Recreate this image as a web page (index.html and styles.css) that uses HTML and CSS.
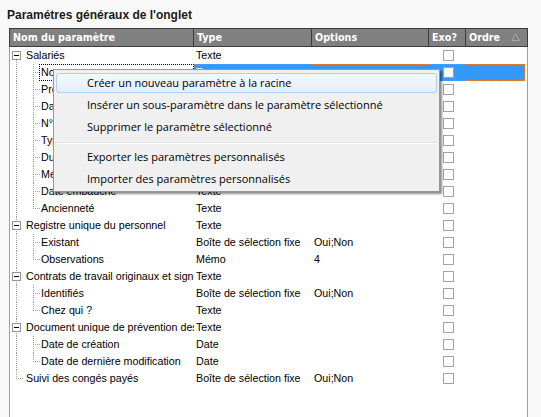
FILE: index.html
```html
<!DOCTYPE html>
<html lang="fr">
<head>
<meta charset="utf-8">
<title>Paramètres généraux de l'onglet</title>
<link rel="stylesheet" href="styles.css">
</head>
<body>
<div class="page">
  <h1 class="title">Paramétres généraux de l'onglet</h1>
  <div class="grid">
    <div class="head">
      <div class="h c1">Nom du paramètre</div>
      <div class="h c2">Type</div>
      <div class="h c3">Options</div>
      <div class="h c4">Exo?</div>
      <div class="h c5">Ordre<svg class="sort" width="9" height="8" viewBox="0 0 9 8"><path d="M4.5 0.8 L8.3 7.5 L0.7 7.5 Z" fill="none" stroke="#aaaaaa" stroke-width="1"/></svg></div>
    </div>
    <div class="body">
      <div class="row"><div class="c1 t root first"><span class="box"></span><span class="lbl">Salariés</span></div><div class="c2">Texte</div><div class="c3"></div><div class="c4"><span class="cb"></span></div><div class="c5"></div></div>
      <div class="row sel"><div class="c1 t child"><span class="lbl focus">Nom</span></div><div class="c2">Texte</div><div class="c3"></div><div class="c4"><span class="cb"></span></div><div class="c5"></div></div>
      <div class="row"><div class="c1 t child"><span class="lbl">Prénom</span></div><div class="c2">Texte</div><div class="c3"></div><div class="c4"><span class="cb"></span></div><div class="c5"></div></div>
      <div class="row"><div class="c1 t child"><span class="lbl">Date de naissance</span></div><div class="c2">Date</div><div class="c3"></div><div class="c4"><span class="cb"></span></div><div class="c5"></div></div>
      <div class="row"><div class="c1 t child"><span class="lbl">N° de sécurité sociale</span></div><div class="c2">Texte</div><div class="c3"></div><div class="c4"><span class="cb"></span></div><div class="c5"></div></div>
      <div class="row"><div class="c1 t child"><span class="lbl">Type de contrat</span></div><div class="c2">Texte</div><div class="c3"></div><div class="c4"><span class="cb"></span></div><div class="c5"></div></div>
      <div class="row"><div class="c1 t child"><span class="lbl">Durée du contrat</span></div><div class="c2">Texte</div><div class="c3"></div><div class="c4"><span class="cb"></span></div><div class="c5"></div></div>
      <div class="row"><div class="c1 t child"><span class="lbl">Métier</span></div><div class="c2">Texte</div><div class="c3"></div><div class="c4"><span class="cb"></span></div><div class="c5"></div></div>
      <div class="row"><div class="c1 t child"><span class="lbl">Date embauche</span></div><div class="c2">Texte</div><div class="c3"></div><div class="c4"><span class="cb"></span></div><div class="c5"></div></div>
      <div class="row"><div class="c1 t child last"><span class="lbl">Ancienneté</span></div><div class="c2">Texte</div><div class="c3"></div><div class="c4"><span class="cb"></span></div><div class="c5"></div></div>
      <div class="row"><div class="c1 t root"><span class="box"></span><span class="lbl">Registre unique du personnel</span></div><div class="c2">Texte</div><div class="c3"></div><div class="c4"><span class="cb"></span></div><div class="c5"></div></div>
      <div class="row"><div class="c1 t child"><span class="lbl">Existant</span></div><div class="c2">Boîte de sélection fixe</div><div class="c3">Oui;Non</div><div class="c4"><span class="cb"></span></div><div class="c5"></div></div>
      <div class="row"><div class="c1 t child last"><span class="lbl">Observations</span></div><div class="c2">Mémo</div><div class="c3">4</div><div class="c4"><span class="cb"></span></div><div class="c5"></div></div>
      <div class="row"><div class="c1 t root"><span class="box"></span><span class="lbl">Contrats de travail originaux et signés</span></div><div class="c2">Texte</div><div class="c3"></div><div class="c4"><span class="cb"></span></div><div class="c5"></div></div>
      <div class="row"><div class="c1 t child"><span class="lbl">Identifiés</span></div><div class="c2">Boîte de sélection fixe</div><div class="c3">Oui;Non</div><div class="c4"><span class="cb"></span></div><div class="c5"></div></div>
      <div class="row"><div class="c1 t child last"><span class="lbl">Chez qui ?</span></div><div class="c2">Texte</div><div class="c3"></div><div class="c4"><span class="cb"></span></div><div class="c5"></div></div>
      <div class="row"><div class="c1 t root"><span class="box"></span><span class="lbl">Document unique de prévention des risques</span></div><div class="c2">Texte</div><div class="c3"></div><div class="c4"><span class="cb"></span></div><div class="c5"></div></div>
      <div class="row"><div class="c1 t child"><span class="lbl">Date de création</span></div><div class="c2">Date</div><div class="c3"></div><div class="c4"><span class="cb"></span></div><div class="c5"></div></div>
      <div class="row"><div class="c1 t child last"><span class="lbl">Date de dernière modification</span></div><div class="c2">Date</div><div class="c3"></div><div class="c4"><span class="cb"></span></div><div class="c5"></div></div>
      <div class="row"><div class="c1 t leaflast"><span class="lbl">Suivi des congés payés</span></div><div class="c2">Boîte de sélection fixe</div><div class="c3">Oui;Non</div><div class="c4"><span class="cb"></span></div><div class="c5"></div></div>
    </div>
  </div>

  <div class="menu">
    <div class="mi hot"><span class="mt">Créer un nouveau paramètre à la racine</span></div>
    <div class="mi"><span class="mt">Insérer un sous-paramètre dans le paramètre sélectionné</span></div>
    <div class="mi"><span class="mt">Supprimer le paramètre sélectionné</span></div>
    <div class="sep"></div>
    <div class="mi"><span class="mt">Exporter les paramètres personnalisés</span></div>
    <div class="mi"><span class="mt">Importer des paramètres personnalisés</span></div>
  </div>
</div>
</body>
</html>
```

FILE: styles.css
```css
html, body {
  margin: 0;
  padding: 0;
  background: #f9f9f9;
  height: 100%;
  overflow: hidden;
}

.page {
  position: relative;
  width: 541px;
  height: 417px;
  overflow: hidden;
  font-family: "Liberation Sans", Arial, sans-serif;
  color: #000;
}

.title {
  margin: 8px 0 6px 7px;
  font: bold 12px/14px "Liberation Sans", Arial, sans-serif;
  color: #1a1a1a;
}

.grid {
  margin-left: 9px;
  width: 519px;
}

.head {
  display: flex;
  height: 19px;
  box-sizing: border-box;
  border: 1px solid #3c3c3c;
  background: #808080;
}

.h {
  box-sizing: border-box;
  border-right: 1px solid #3c3c3c;
  color: #fff;
  font-family: "DejaVu Sans Condensed", "DejaVu Sans", sans-serif;
  font-stretch: condensed;
  font-weight: bold;
  font-size: 10.7px;
  line-height: 17px;
  padding-left: 3px;
  white-space: nowrap;
  overflow: hidden;
}

.h.c5 {
  border-right: 0;
  display: flex;
  align-items: center;
  justify-content: space-between;
  padding-right: 5px;
}

.sort { display: block; margin-top: -1px; }

.c1 { width: 184px; flex: none; }
.c2 { width: 118px; flex: none; }
.c3 { width: 117px; flex: none; }
.c4 { width: 37px; flex: none; }
.c5 { width: 59px; flex: none; }

.body {
  background: #fff;
  border-left: 1px solid #a0a0a0;
  border-right: 1px solid #a0a0a0;
  height: 400px;
}

.row {
  display: flex;
  height: 17px;
  font-size: 10.7px;
  line-height: 17px;
}

.row > div {
  box-sizing: border-box;
  white-space: nowrap;
  overflow: hidden;
}

.row .c2, .row .c3 { padding-left: 2px; }

.row .c4 {
  display: flex;
  align-items: center;
  justify-content: center;
  padding-left: 2px;
}

.cb {
  width: 11px;
  height: 11px;
  box-sizing: border-box;
  border: 1px solid #a3a3a3;
  background: #fff;
}

/* tree cell */
.t {
  display: flex;
  align-items: center;
  background-repeat: no-repeat;
}

.t .lbl {
  flex: 1;
  min-width: 0;
  overflow: hidden;
}

.box {
  position: relative;
  flex: none;
  width: 9px;
  height: 9px;
  box-sizing: border-box;
  border: 1px solid #939393;
  background: #fff;
  margin: 0 5px 0 2px;
}

.box::after {
  content: "";
  position: absolute;
  left: 1px;
  top: 3px;
  width: 5px;
  height: 1px;
  background: #000;
}

/* dotted connector lines */
.root {
  background-image: repeating-linear-gradient(to bottom, #a0a0a0 0 1px, transparent 1px 2px);
  background-size: 1px 17px;
  background-position: 6px 0;
}

.root.first {
  background-size: 1px 8px;
  background-position: 6px 9px;
}

.child {
  padding-left: 29px;
  background-image:
    repeating-linear-gradient(to bottom, #a0a0a0 0 1px, transparent 1px 2px),
    repeating-linear-gradient(to bottom, #a0a0a0 0 1px, transparent 1px 2px),
    repeating-linear-gradient(to right, #a0a0a0 0 1px, transparent 1px 2px);
  background-size: 1px 17px, 1px 17px, 7px 1px;
  background-position: 6px 0, 23px 0, 23px 8px;
}

.child.last {
  background-size: 1px 17px, 1px 9px, 7px 1px;
}

.leaflast {
  padding-left: 16px;
  background-image:
    repeating-linear-gradient(to bottom, #a0a0a0 0 1px, transparent 1px 2px),
    repeating-linear-gradient(to right, #a0a0a0 0 1px, transparent 1px 2px);
  background-size: 1px 9px, 8px 1px;
  background-position: 6px 0, 6px 8px;
}

.child .lbl { padding-left: 2px; }

.lbl.focus {
  height: 17px;
  box-sizing: border-box;
  border: 1px dotted #000;
  padding-left: 1px;
  line-height: 15px;
}

/* selected row */
.row.sel .c2,
.row.sel .c3,
.row.sel .c4,
.row.sel .c5 {
  background: #3399ff;
  color: #fff;
  border-top: 1px dotted #e8822a;
  border-bottom: 1px dotted #e8822a;
  line-height: 15px;
}

.row.sel .c5 { border-right: 1px dotted #e8822a; }

/* context menu */
.menu {
  position: absolute;
  left: 53px;
  top: 69px;
  width: 387px;
  box-sizing: border-box;
  border: 1px solid #979797;
  background: #f0f0f0;
  padding: 2px 0 1px;
  box-shadow: 2px 2px 2px rgba(0, 0, 0, 0.45);
  font-family: "Open Sans", "Noto Sans", sans-serif;
  font-size: 11px;
  color: #000;
}

.mi {
  height: 22px;
  padding: 1px 2px;
  box-sizing: border-box;
}

.mt {
  display: block;
  height: 20px;
  box-sizing: border-box;
  border: 1px solid transparent;
  border-radius: 3px;
  padding-left: 30px;
  line-height: 18px;
  white-space: nowrap;
}

.mi.hot .mt {
  border-color: #aecff7;
  background: linear-gradient(#f4f8fe, #e6eefb);
}

.sep {
  height: 8px;
  margin: 0 2px;
  background:
    linear-gradient(#e0e0e0, #e0e0e0) 0 4px / 100% 1px no-repeat,
    linear-gradient(#ffffff, #ffffff) 0 5px / 100% 1px no-repeat;
}
```
